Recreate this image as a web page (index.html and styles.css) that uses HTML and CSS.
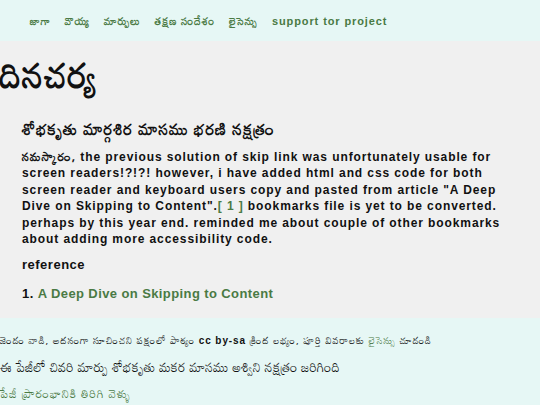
FILE: index.html
```html
<!DOCTYPE html>
<html lang="te">
<head>
<meta charset="utf-8">
<title>దినచర్య</title>
<link rel="stylesheet" href="styles.css">
</head>
<body>
<nav class="topnav">
  <a href="#" class="te">జాగా</a>
  <a href="#" class="te">వొయ్య</a>
  <a href="#" class="te">మార్పులు</a>
  <a href="#" class="te">తక్షణ సందేశం</a>
  <a href="#" class="te">లైసెన్సు</a>
  <a href="#" class="latin">support tor project</a>
</nav>
<main class="content">
  <h1 class="title">దినచర్య</h1>
  <article class="entry">
    <h2 class="entry-date">శోభకృతు మార్గశిర మాసము భరణి నక్షత్రం</h2>
    <p class="entry-text"><span class="te">నమస్కారం,</span> the previous solution of skip link was unfortunately usable for screen readers!?!?! however, i have added html and css code for both screen reader and keyboard users copy and pasted from article "A Deep Dive on Skipping to Content".<a href="#" class="ref">[ 1 ]</a> bookmarks file is yet to be converted. perhaps by this year end. reminded me about couple of other bookmarks about adding more accessibility code.</p>
    <h3 class="ref-title">reference</h3>
    <ol class="ref-list">
      <li><a href="#">A Deep Dive on Skipping to Content</a></li>
    </ol>
  </article>
</main>
<footer class="foot">
  <p class="license">జెండం వాడి, అదనంగా సూచించని పక్షంలో పాఠ్యం <span class="latin">cc by-sa</span> క్రింద లభ్యం, పూర్తి వివరాలకు <a href="#">లైసెన్సు</a> చూడండి</p>
  <p class="modified">ఈ పేజీలో చివరి మార్పు శోభకృతు మకర మాసము అశ్విని నక్షత్రం జరిగింది</p>
  <p class="totop"><a href="#">పేజీ ప్రారంభానికి తిరిగి వెళ్ళు</a></p>
</footer>
</body>
</html>
```

FILE: styles.css
```css
html, body {
  margin: 0;
  padding: 0;
}
body {
  font-family: "Liberation Sans", "Mandali", "Noto Sans Telugu", sans-serif;
  color: #111;
  background: #f0f0f0;
  letter-spacing: 0.9px;
}
a {
  color: #4a7a44;
  text-decoration: none;
}
.te {
  font-family: "Mandali", "Noto Sans Telugu", sans-serif;
  font-weight: bold;
}
.latin {
  font-family: "Liberation Sans", Arial, sans-serif;
  font-weight: bold;
}
.topnav {
  background: #e6f7f5;
  height: 41px;
  display: flex;
  align-items: center;
  gap: 14px;
  padding-left: 30px;
  font-size: 10.6px;
}
.topnav .latin {
  font-size: 11px;
}
.content {
  background: #f0f0f0;
  padding: 0 0 15px;
}
.title {
  margin: 9px 0 0;
  font-family: "Mandali", "Noto Sans Telugu", sans-serif;
  font-size: 35px;
  font-weight: bold;
  line-height: 50px;
}
.entry {
  padding: 0 22px;
}
.entry-date {
  margin: 17px 0 7px;
  font-family: "Mandali", "Noto Sans Telugu", sans-serif;
  font-size: 16px;
  font-weight: bold;
  line-height: 24px;
}
.entry-text {
  margin: 0;
  font-size: 12px;
  font-weight: bold;
  line-height: 16.4px;
}
.ref-title {
  margin: 9px 0 11px;
  font-size: 13px;
  font-weight: bold;
  letter-spacing: 0.5px;
  line-height: 18px;
}
.ref-list {
  margin: 0;
  padding-left: 0;
  list-style-position: inside;
  font-size: 13px;
  font-weight: bold;
  letter-spacing: 0.4px;
  line-height: 18px;
}
.foot {
  background: #e6f7f5;
  padding: 13px 0 4px;
  font-family: "Mandali", "Noto Sans Telugu", sans-serif;
}
.foot p {
  margin: 0 0 8px;
  font-size: 12px;
  line-height: 18px;
}
.foot .license {
  font-size: 10px;
}
.foot .modified {
  font-size: 13px;
  letter-spacing: 0.2px;
}
```
